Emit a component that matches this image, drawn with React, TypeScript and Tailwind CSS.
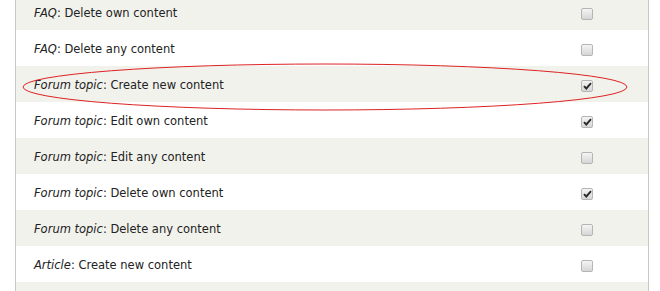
import React from 'react';

const rows = [
  { type: 'FAQ', label: 'Delete own content', checked: false },
  { type: 'FAQ', label: 'Delete any content', checked: false },
  { type: 'Forum topic', label: 'Create new content', checked: true },
  { type: 'Forum topic', label: 'Edit own content', checked: true },
  { type: 'Forum topic', label: 'Edit any content', checked: false },
  { type: 'Forum topic', label: 'Delete own content', checked: true },
  { type: 'Forum topic', label: 'Delete any content', checked: false },
  { type: 'Article', label: 'Create new content', checked: false },
];

const Checkbox: React.FC<{ checked: boolean }> = ({ checked }) => (
  <div className="w-[12px] h-[12px] rounded-[2px] border border-[#b5b5b5] bg-gradient-to-b from-[#f4f4f4] to-[#d6d6d6] flex items-center justify-center">
    {checked && (
      <svg width="9" height="8" viewBox="0 0 9 8">
        <path d="M1 4.2 L3.3 6.5 L8 1.2" fill="none" stroke="#2b2b2b" strokeWidth="1.9" />
      </svg>
    )}
  </div>
);

export default function App() {
  return (
    <div className="relative w-[660px] h-[291px] overflow-hidden bg-white font-['DejaVu_Sans',sans-serif]">
      <div className="ml-[15px] w-[634px] mt-[-6px] border-x border-[#c8c8c8]">
        {rows.map((row, i) => (
          <div
            key={i}
            className={`h-[36px] flex items-center pt-[3px] ${i % 2 === 0 ? 'bg-[#f2f2ed]' : 'bg-white'}`}
          >
            <div className="pl-[18px] flex-1 text-[11.5px] text-[#222]">
              <em>{row.type}</em>: {row.label}
            </div>
            <div className="w-[80px] pl-[13px]">
              <Checkbox checked={row.checked} />
            </div>
          </div>
        ))}
        {/* next row, only its top edge shows */}
        <div className="h-[36px] bg-[#f2f2ed]" />
      </div>
      <svg className="absolute left-0 top-0" width="660" height="291">
        <ellipse cx="325" cy="87" rx="302" ry="23" fill="none" stroke="#d22" strokeWidth="1" />
      </svg>
    </div>
  );
}
